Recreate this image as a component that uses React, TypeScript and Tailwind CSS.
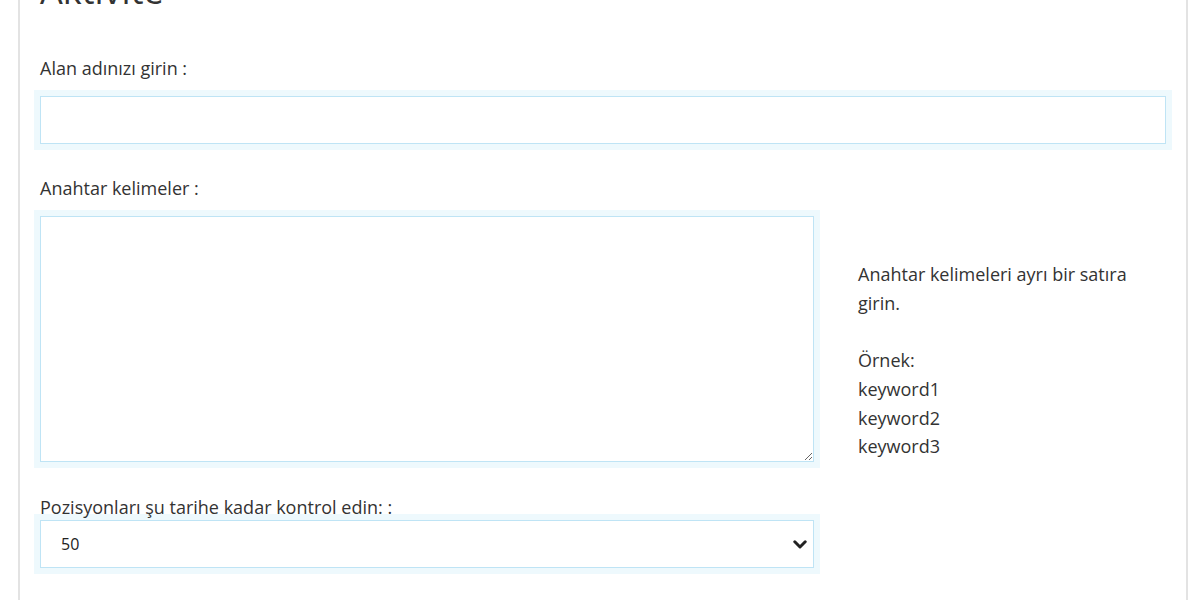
export default function App() {
  return (
    <div className="h-[600px] bg-white text-[#333] overflow-hidden" style={{ fontFamily: "'Open Sans', sans-serif" }}>
      <div className="ml-[18px] flow-root h-full w-[1170px] border-x-2 border-[#e3e3e3] px-5">
        <h2 className="-mt-[27px] text-[36px] leading-none text-[#333]">Aktivite</h2>

        {/* Domain */}
        <label className="mt-[47px] block text-[18px] leading-6">Alan adınızı girin :</label>
        <input
          type="text"
          className="mt-4 block h-12 w-full border border-[#bfe4f5] bg-white px-5 text-[16px] outline-none ring-[6px] ring-[#eef9fd]"
        />

        {/* Keywords */}
        <label className="mt-8 block text-[18px] leading-6">Anahtar kelimeler :</label>
        <div className="mt-4 flex gap-[44px]">
          <textarea className="block h-[246px] w-[774px] border border-[#bfe4f5] bg-white p-3 text-[16px] outline-none ring-[6px] ring-[#eef9fd]" />
          <div className="flex-1 pt-[44px] pr-4 text-[18px] leading-[28.7px]">
            <p>Anahtar kelimeleri ayrı bir satıra girin.</p>
            <p className="mt-[28.7px]">Örnek:</p>
            <p>keyword1</p>
            <p>keyword2</p>
            <p>keyword3</p>
          </div>
        </div>

        {/* Positions */}
        <label className="relative z-10 mt-[33px] block text-[18px] leading-6">Pozisyonları şu tarihe kadar kontrol edin: :</label>
        <div className="relative mt-px w-[774px]">
          <select className="block h-12 w-full appearance-none border border-[#bfe4f5] bg-white pl-5 text-[16px] text-[#222] outline-none ring-[6px] ring-[#eef9fd]">
            <option>50</option>
            <option>100</option>
          </select>
          <svg className="pointer-events-none absolute right-[7px] top-[20px]" width="14" height="9" viewBox="0 0 14 9" fill="none">
            <path d="M1.8 1.8 L7 7 L12.2 1.8" stroke="#222" strokeWidth="3" strokeLinecap="round" strokeLinejoin="round" />
          </svg>
        </div>
      </div>
    </div>
  );
}
